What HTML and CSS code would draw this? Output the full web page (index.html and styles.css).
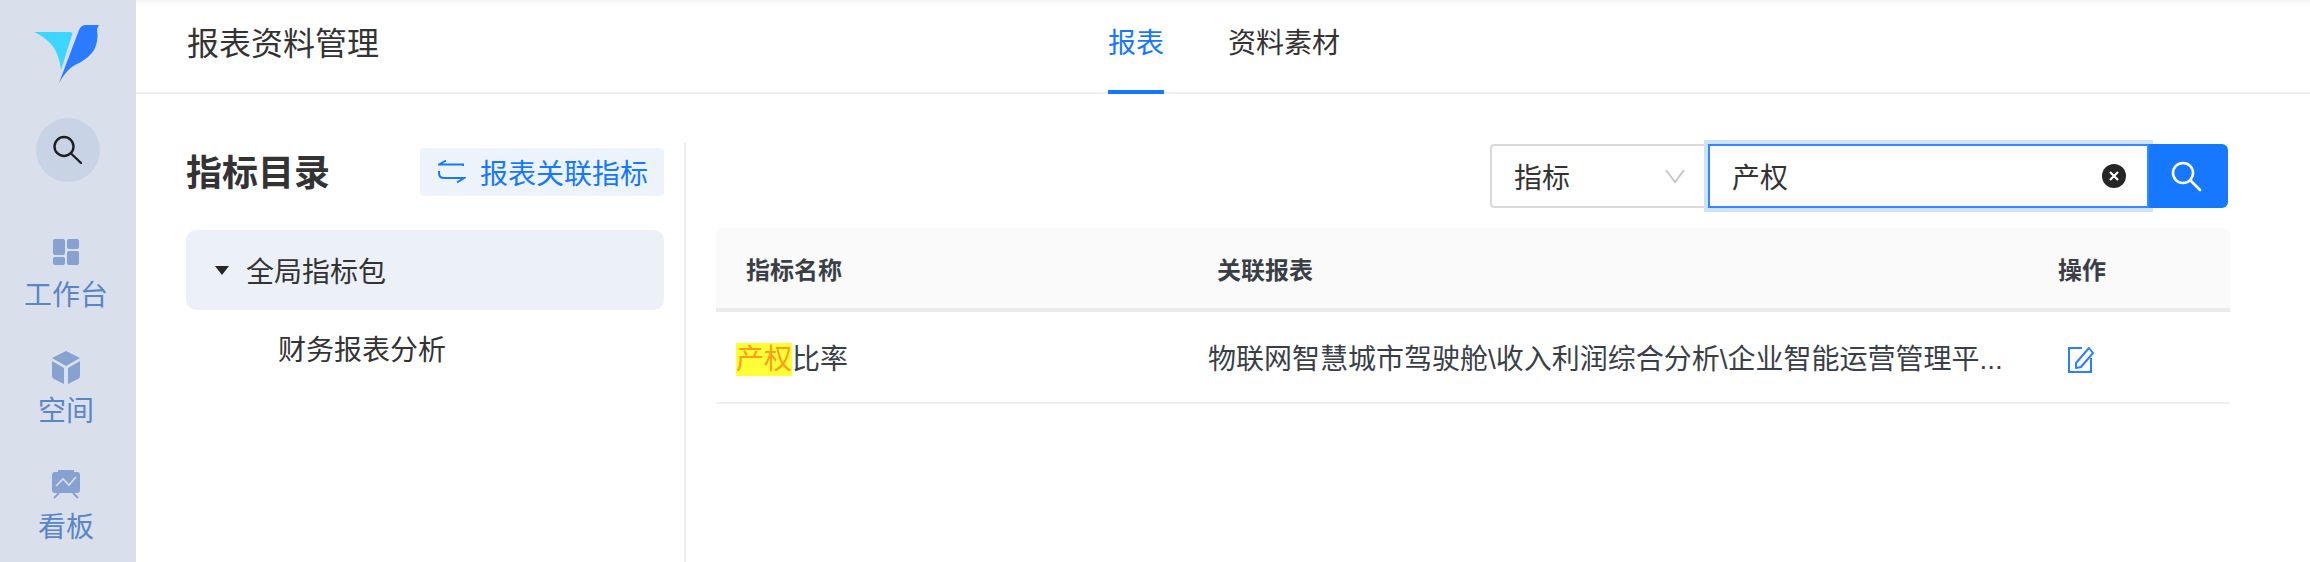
FILE: index.html
```html
<!DOCTYPE html>
<html lang="zh-CN">
<head>
<meta charset="UTF-8">
<meta name="viewport" content="width=device-width, initial-scale=1.0">
<title>报表资料管理</title>
<link rel="stylesheet" href="styles.css">
</head>
<body>

<div class="sidebar">
  <svg class="logo" width="84" height="70" viewBox="0 0 84 70">
    <path fill="#3dd6ff" d="M8 12H44Q47 12 46 15L35 50Q33 32 24 23Q17 16 8 12Z"/>
    <path fill="#2a7bff" d="M33 63L53 10Q55 5 60 5H73L71 9Q72 16 71 21Q70 30 62 37Q56 42 49 45Q41 49 33 63Z"/>
  </svg>
  <div class="search-circle">
    <svg width="32" height="32" viewBox="0 0 32 32" fill="none" stroke="#1f1f1f" stroke-width="2.4">
      <circle cx="12" cy="12.500" r="9.500"/>
      <path d="M19 19.500L29 29" stroke-linecap="round"/>
    </svg>
  </div>
  <div class="nav-item nav-first">
    <svg width="44" height="44" viewBox="0 0 44 44" fill="#87a2d0">
      <rect x="9" y="9" width="12" height="16" rx="2"/>
      <rect x="9" y="27" width="12" height="8" rx="2"/>
      <rect x="23" y="9" width="12" height="10" rx="2"/>
      <rect x="23" y="21" width="12" height="14" rx="2"/>
    </svg>
    <span>工作台</span>
  </div>
  <div class="nav-item">
    <svg width="44" height="44" viewBox="0 0 44 44" fill="#87a2d0">
      <path d="M22 5L36 12L22 20L8 12Z"/>
      <path d="M8 15L20 22V38L10 33Q8 32 8 30Z"/>
      <path d="M36 15L24 22V38L34 33Q36 32 36 30Z"/>
    </svg>
    <span>空间</span>
  </div>
  <div class="nav-item">
    <svg width="44" height="44" viewBox="0 0 44 44">
      <path fill="#87a2d0" d="M14 10V8H30V10H33Q36 10 36 13V28Q36 31 33 31H11Q8 31 8 28V13Q8 10 11 10Z"/>
      <path fill="none" stroke="#87a2d0" stroke-width="2" d="M15 31L10 36M29 31L34 36"/>
      <path fill="none" stroke="#d9e0ec" stroke-width="1.6" d="M12 24L19 17L25 23L32 15"/>
    </svg>
    <span>看板</span>
  </div>
</div>

<div class="main">
  <div class="header">
    <div class="page-title">报表资料管理</div>
    <div class="tabs">
      <div class="tab active">报表</div>
      <div class="tab">资料素材</div>
    </div>
  </div>

  <div class="content">
    <div class="left-panel">
      <div class="left-head">
        <h2>指标目录</h2>
        <div class="link-btn">
          <svg width="28" height="28" viewBox="8 8 28 28" fill="none" stroke="#1677ff" stroke-width="2">
            <path d="M16 10.500L9 14.500H33V16"/>
            <path d="M9 21V23Q9 28 14 28H34L27 32.500"/>
          </svg>
          报表关联指标
        </div>
      </div>
      <div class="tree-root"><i class="caret"></i>全局指标包</div>
      <div class="tree-child">财务报表分析</div>
    </div>

    <div class="right-panel">
      <div class="search-bar">
        <div class="select">
          指标
          <svg width="22" height="16" viewBox="0 0 22 16" fill="none" stroke="#c8c8c8" stroke-width="2"><path d="M2 2L11 14L20 2"/></svg>
        </div>
        <div class="search-input">
          产权
          <svg class="clear" width="24" height="24" viewBox="0 0 24 24">
            <circle cx="12" cy="12" r="12" fill="#262626"/>
            <path d="M8 8L16 16M16 8L8 16" stroke="#fff" stroke-width="2.200"/>
          </svg>
        </div>
        <div class="search-btn">
          <svg width="32" height="32" viewBox="0 0 32 32" fill="none" stroke="#fff" stroke-width="2.600">
            <circle cx="13" cy="13" r="10"/>
            <path d="M20.500 20.500L30 30" stroke-linecap="round"/>
          </svg>
        </div>
      </div>

      <div class="grid-table">
        <div class="row head">
          <div class="cell first">指标名称</div>
          <div class="cell">关联报表</div>
          <div class="cell">操作</div>
        </div>
        <div class="row">
          <div class="cell first"><mark>产权</mark>比率</div>
          <div class="cell">物联网智慧城市驾驶舱\收入利润综合分析\企业智能运营管理平...</div>
          <div class="cell action">
            <svg width="28" height="28" viewBox="9 9 28 28" fill="none" stroke="#2a7fff" stroke-width="2">
              <path d="M24 11H11V35H33V21"/>
              <path d="M18 26L18 31L23 30L35 16L31 11Z" stroke-linejoin="round"/>
            </svg>
          </div>
        </div>
      </div>
    </div>
  </div>
</div>

</body>
</html>
```

FILE: styles.css
```css
* {
  box-sizing: border-box;
}
html, body {
  height: 100%;
}
body {
  margin: 0;
  display: flex;
  overflow: hidden;
  font-family: "Liberation Sans", "Noto Sans CJK SC", sans-serif;
  font-size: 28px;
  color: #333;
  background-color: #fff;
}
.sidebar {
  flex: 0 0 136px;
  display: flex;
  flex-direction: column;
  align-items: center;
  height: 562px;
  overflow: hidden;
  padding-top: 20px;
  background-color: #d9e0ec;
  color: #5b86c6;
}
.logo {
  display: block;
  flex: none;
}
.search-circle {
  flex: none;
  width: 64px;
  height: 64px;
  margin-top: 28px;
  display: flex;
  align-items: center;
  justify-content: center;
  border-radius: 50%;
  background-color: #c8d4e6;
}
.nav-item {
  flex: none;
  display: flex;
  flex-direction: column;
  align-items: center;
  height: 116px;
  margin-right: 4px;
  line-height: 36px;
}
.nav-item svg {
  display: block;
  margin-bottom: 4px;
}
.nav-first {
  margin-top: 48px;
}
.main {
  flex: 1;
  min-width: 0;
}
.header {
  display: flex;
  height: 94px;
  padding-left: 51px;
  border-bottom: 2px solid #f0f0f0;
  box-shadow: inset 0 8px 8px -8px rgba(0, 0, 0, 0.08);
}
.page-title {
  width: 192px;
  font-size: 32px;
  line-height: 88px;
}
.tabs {
  display: flex;
  gap: 64px;
  margin-left: 729px;
}
.tab {
  height: 94px;
  line-height: 88px;
}
.tab.active {
  color: #1677ff;
  border-bottom: 4px solid #1677ff;
}
.content {
  display: flex;
  padding-top: 49px;
}
.left-panel {
  flex: 0 0 550px;
  height: 419px;
  padding: 5px 20px 0 50px;
  border-right: 2px solid #eee;
}
.left-head {
  display: flex;
  align-items: center;
  justify-content: space-between;
  height: 48px;
}
.left-head h2 {
  margin: 0 0 5px;
  font-size: 36px;
  font-weight: 700;
}
.link-btn {
  display: flex;
  align-items: center;
  gap: 14px;
  width: 244px;
  height: 48px;
  padding-left: 18px;
  border-radius: 4px;
  background-color: #edf3fb;
  color: #1677ff;
}
.tree-root {
  display: flex;
  align-items: center;
  height: 80px;
  margin-top: 34px;
  padding-left: 29px;
  border-radius: 10px;
  background-color: #ecf1f8;
}
.caret {
  width: 0;
  height: 0;
  margin-right: 17px;
  border-top: 9px solid #262626;
  border-left: 7px solid transparent;
  border-right: 7px solid transparent;
}
.tree-child {
  height: 80px;
  padding-left: 92px;
  line-height: 82px;
}
.right-panel {
  flex: 1;
  min-width: 0;
  padding: 1px 80px 0 30px;
}
.search-bar {
  display: flex;
  justify-content: flex-end;
  height: 64px;
  padding-right: 2px;
}
.select {
  display: flex;
  align-items: center;
  justify-content: space-between;
  width: 218px;
  padding: 0 22px 0 22px;
  border: 2px solid #d9d9d9;
  border-right: none;
  border-radius: 4px 0 0 4px;
}
.search-input {
  display: flex;
  align-items: center;
  justify-content: space-between;
  width: 441px;
  padding: 0 21px 0 22px;
  border: 2px solid #3388ff;
  box-shadow: 0 0 0 4px #cfe2fd;
  background-color: #fff;
  position: relative;
}
.search-btn {
  display: flex;
  align-items: center;
  justify-content: center;
  width: 79px;
  padding-right: 5px;
  border-radius: 0 6px 6px 0;
  background-color: #1677ff;
  position: relative;
}
.grid-table {
  margin-top: 20px;
}
.row {
  display: grid;
  grid-template-columns: 492px 842px 180px;
  align-items: center;
  height: 92px;
  border-bottom: 2px solid #f0f0f0;
  color: #3a3f47;
}
.row.head {
  height: 84px;
  border-bottom: 4px solid #ebebeb;
  border-radius: 6px 6px 0 0;
  background-color: #fafafa;
  font-size: 24px;
  font-weight: 700;
}
.head .cell {
  padding-left: 9px;
}
.row .first {
  padding-left: 20px;
}
.row.head .first {
  padding-left: 30px;
}
.row.head .cell:last-child {
  padding-left: 8px;
}
mark {
  padding: 1px 0;
  background-color: #ffff37;
  color: #ff9c1a;
}
.action {
  padding-left: 17px;
}
.action svg {
  display: block;
  margin-top: 5px;
}
```
